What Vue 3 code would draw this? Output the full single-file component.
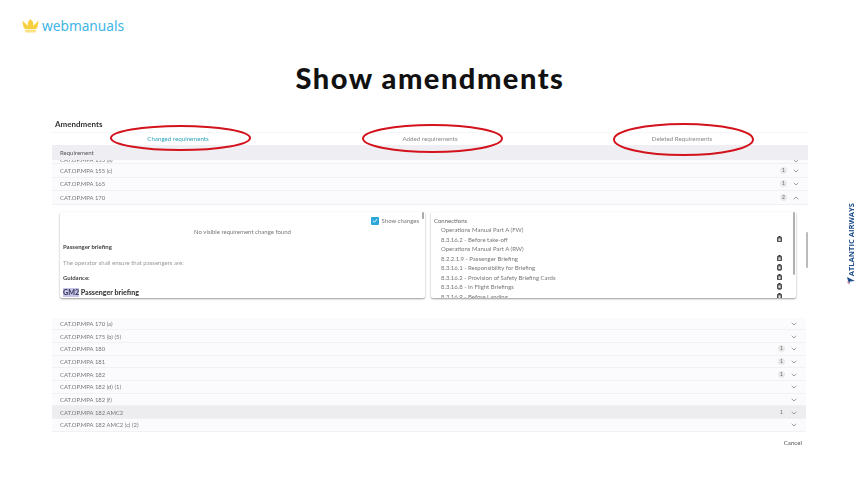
<script setup>
const topRows = [
  { name: 'CAT.OP.MPA 155 (c)', badge: 1 },
  { name: 'CAT.OP.MPA 165', badge: 1 },
  { name: 'CAT.OP.MPA 170', badge: 2, open: true }
]
const bottomRows = [
  { name: 'CAT.OP.MPA 170 (a)' },
  { name: 'CAT.OP.MPA 175 (b) (5)' },
  { name: 'CAT.OP.MPA 180', badge: 1 },
  { name: 'CAT.OP.MPA 181', badge: 1 },
  { name: 'CAT.OP.MPA 182', badge: 1 },
  { name: 'CAT.OP.MPA 182 (d) (1)' },
  { name: 'CAT.OP.MPA 182 (f)' },
  { name: 'CAT.OP.MPA 182 AMC2', badge: 1, selected: true },
  { name: 'CAT.OP.MPA 182 AMC2 (c) (2)' }
]
const tabs = [
  { label: 'Changed requirements', active: true },
  { label: 'Added requirements' },
  { label: 'Deleted Requirements' }
]
const marks = [
  { x: 111, y: 126, w: 139, h: 24 },
  { x: 363, y: 125, w: 139, h: 27 },
  { x: 614, y: 124, w: 139, h: 31 }
]
const connections = [
  { text: 'Operations Manual Part A (FW)' },
  { text: '8.3.16.2 - Before take-off', bin: true },
  { text: 'Operations Manual Part A (RW)' },
  { text: '8.2.2.1.9 - Passenger Briefing', bin: true },
  { text: '8.3.16.1 - Responsibility for Briefing', bin: true },
  { text: '8.3.16.2 - Provision of Safety Briefing Cards', bin: true },
  { text: '8.3.16.8 - In Flight Briefings', bin: true },
  { text: '8.3.16.9 - Before Landing', bin: true }
]
</script>

<template>
  <div class="slide">
    <header class="brand">
      <svg class="crown" viewBox="0 0 17 14" width="17" height="14">
        <path fill="#f8cf3e" d="M0.3 1.5 L4.5 5.5 L5.6 7 L6 3 L8.5 0 L11 3 L11.4 7 L12.5 5.5 L16.7 1.5 L15.4 8.5 Q14.2 10.2 13 10.2 L4 10.2 Q2.8 10.2 1.6 8.5 Z" />
        <path fill="#fbe27f" d="M2.6 11 H14.4 L13.4 13.6 H3.6 Z" />
      </svg>
      <span class="brand-name">webmanuals</span>
    </header>

    <h1 class="title">Show amendments</h1>

    <div class="stage">
      <section class="shot">
        <div class="shot-title">Amendments</div>
        <nav class="tabs">
          <div v-for="t in tabs" :key="t.label" class="tab" :class="{ active: t.active }">{{ t.label }}</div>
        </nav>
        <div class="thead">Requirement</div>

        <div class="row clipped">
          <span class="name">CAT.OP.MPA 155 (a)</span>
          <svg class="chev" viewBox="0 0 6 4" width="6" height="4"><path d="M.7 .8 3 3 5.3 .8" /></svg>
        </div>
        <div v-for="r in topRows" :key="r.name" class="row top">
          <span class="name">{{ r.name }}</span>
          <span v-if="r.badge" class="badge">{{ r.badge }}</span>
          <svg class="chev" viewBox="0 0 6 4" width="6" height="4">
            <path :d="r.open ? 'M.7 3.2 3 1 5.3 3.2' : 'M.7 .8 3 3 5.3 .8'" />
          </svg>
        </div>

        <div class="panel">
          <article class="card left">
            <div class="toggle">
              <span class="check">
                <svg viewBox="0 0 9 9" width="9" height="9"><path d="M2 4.7 3.8 6.5 7 2.8" /></svg>
              </span>
              <span>Show changes</span>
            </div>
            <p class="none">No visible requirement change found</p>
            <p class="strong first">Passenger briefing</p>
            <p class="light">The operator shall ensure that passengers are:</p>
            <p class="strong guide">Guidance:</p>
            <p class="gm"><mark>GM2</mark> Passenger briefing</p>
            <i class="thumb small"></i>
          </article>
          <article class="card right">
            <div class="conn-title">Connections</div>
            <div v-for="c in connections" :key="c.text" class="conn">
              <span>{{ c.text }}</span>
              <svg v-if="c.bin" class="bin" viewBox="0 0 5 6.5" width="5" height="6.5">
                <rect x="1.6" y="0" width="1.8" height="1" fill="#333" />
                <rect x="0.5" y="1" width="4" height="5.2" rx="0.8" fill="#666" stroke="#333" stroke-width="0.8" />
                <rect x="1.5" y="2.4" width="2" height="2.6" fill="#ddd" />
              </svg>
            </div>
            <i class="thumb tall"></i>
          </article>
          <i class="outer-thumb"></i>
        </div>

        <div class="lower">
          <div v-for="r in bottomRows" :key="r.name" class="row low" :class="{ selected: r.selected }">
            <span class="name">{{ r.name }}</span>
            <span v-if="r.badge" class="badge" :class="{ plain: r.selected }">{{ r.badge }}</span>
            <svg class="chev" viewBox="0 0 6 4" width="6" height="4"><path d="M.7 .8 3 3 5.3 .8" /></svg>
          </div>
        </div>
        <div class="actions">Cancel</div>
      </section>

      <aside class="airline">
        <span class="airline-name">ATLANTIC AIRWAYS</span>
        <svg viewBox="0 0 8 9" width="8" height="9">
          <path fill="#1f4e8c" d="M0 1 L8 5 L3 5.5 L2 8.5 Z" />
          <path fill="#e8808a" d="M0 5.5 L2 5.5 L1.4 8.5 Z" />
        </svg>
      </aside>
    </div>

    <svg class="marks" viewBox="0 0 865 487" width="865" height="487">
      <ellipse v-for="(m, i) in marks" :key="i"
        :cx="m.x + m.w / 2" :cy="m.y + m.h / 2" :rx="m.w / 2" :ry="m.h / 2" />
    </svg>
  </div>
</template>

<style>
html, body { margin: 0; background: #fff; }
</style>

<style scoped>
.slide {
  position: relative;
  width: 865px;
  height: 487px;
  overflow: hidden;
  background: #fff;
  font-family: "Lato", "Noto Sans", sans-serif;
}
.brand {
  display: flex;
  align-items: center;
  gap: 3px;
  height: 14px;
  padding: 19px 0 0 22px;
}
.crown { flex: none; }
.brand-name {
  font-family: "Noto Sans", sans-serif;
  font-size: 13.7px;
  line-height: 14px;
  margin-top: -1px;
  color: #40b5e6;
}
.title {
  margin: 27px 0 0;
  padding-right: 5px;
  height: 36px;
  line-height: 36px;
  text-align: center;
  font-family: "Lato", sans-serif;
  font-size: 29px;
  font-weight: 900;
  letter-spacing: 1.5px;
  color: #111;
}
.stage {
  display: flex;
  margin-top: 22px;
}
.shot {
  width: 756px;
  margin-left: 52px;
  filter: blur(0.35px);
}
.shot-title {
  height: 14px;
  line-height: 13px;
  padding-left: 3px;
  font-size: 8px;
  font-weight: 700;
  color: #333;
}
.tabs {
  display: grid;
  grid-template-columns: repeat(3, 1fr);
  height: 13px;
  border-top: 1px solid #f6f6f8;
  box-sizing: border-box;
}
.tab {
  text-align: center;
  line-height: 12px;
  font-size: 6.2px;
  color: #8a8a8a;
}
.tab.active { color: #2fa3b8; }
.thead {
  height: 15px;
  line-height: 15px;
  padding-left: 8px;
  background: #eeeef3;
  font-size: 6px;
  color: #555;
}
.row {
  display: flex;
  align-items: center;
  box-sizing: border-box;
  padding: 0 9px 0 8px;
  background: #fbfbfd;
  border-bottom: 1px solid #f1f1f4;
  font-size: 5.9px;
  color: #777;
}
.name { flex: 1; }
.row.clipped {
  height: 4px;
  overflow: hidden;
  align-items: flex-end;
}
.row.clipped .name { line-height: 7px; }
.row.top { height: 13.6px; }
.row.low {
  height: 12.65px;
  margin-right: 2px;
}
.row.selected { background: #ededf0; }
.badge {
  width: 7px;
  height: 7px;
  margin-right: 6px;
  border-radius: 50%;
  background: #e9e9e9;
  text-align: center;
  line-height: 7px;
  font-size: 5px;
  color: #666;
}
.badge.plain { background: transparent; }
.chev {
  flex: none;
  margin-top: 1px;
  fill: none;
  stroke: #888;
  stroke-width: 0.8;
}
.panel {
  position: relative;
  display: flex;
  gap: 6px;
  height: 100px;
  padding: 7px 0 0 8px;
  box-sizing: border-box;
  margin-bottom: 13px;
}
.card {
  position: relative;
  width: 365px;
  height: 86px;
  overflow: hidden;
  background: #fff;
  border-radius: 2px;
  box-shadow: 0 1px 2px rgba(0, 0, 0, 0.4);
  box-sizing: border-box;
  font-size: 6px;
  color: #555;
}
.card p { margin: 0; }
.card.left { padding: 4px 3px 0; }
.toggle {
  display: flex;
  justify-content: flex-end;
  align-items: center;
  gap: 3px;
  height: 10px;
  padding-right: 3px;
  color: #777;
}
.check {
  width: 8px;
  height: 8px;
  border-radius: 1px;
  background: #2ba6d9;
  display: flex;
  align-items: center;
  justify-content: center;
}
.check svg {
  fill: none;
  stroke: #fff;
  stroke-width: 1;
}
.none {
  height: 12px;
  line-height: 12px;
  text-align: center;
  color: #777;
}
.strong {
  font-weight: 700;
  color: #444;
}
.first { margin-top: 4px !important; height: 9px; line-height: 9px; }
.light {
  margin-top: 7px !important;
  height: 9px;
  line-height: 9px;
  color: #999;
}
.guide { margin-top: 6px !important; height: 9px; line-height: 9px; }
.gm {
  margin-top: 6px !important;
  font-size: 7.1px;
  font-weight: 900;
  line-height: 10px;
  color: #3a3a3a;
}
.gm mark {
  background: #c8c5ea;
  color: #3a3a5a;
}
.thumb {
  position: absolute;
  top: 0;
  width: 2.5px;
  border-radius: 1px;
  background: #aaa;
}
.thumb.small { right: 1px; height: 7px; }
.thumb.tall { right: 1px; height: 63px; background: #b0b0b0; }
.card.right { padding: 5px 3px 0; }
.conn-title {
  height: 8px;
  line-height: 8px;
  color: #666;
}
.conn {
  display: flex;
  align-items: center;
  justify-content: space-between;
  height: 9.5px;
  padding: 0 11px 0 7px;
  color: #777;
}
.bin { flex: none; }
.outer-thumb {
  position: absolute;
  right: 0;
  top: 27px;
  width: 2px;
  height: 36px;
  border-radius: 1px;
  background: #bbb;
}
.actions {
  height: 16px;
  line-height: 22px;
  text-align: right;
  padding-right: 6px;
  font-size: 6.2px;
  color: #555;
}
.airline {
  display: flex;
  flex-direction: column;
  align-items: center;
  margin: 85px 0 0 39px;
  width: 8px;
}
.airline-name {
  writing-mode: vertical-rl;
  transform: rotate(180deg);
  font-family: "Open Sans", sans-serif;
  font-size: 7.6px;
  font-weight: 700;
  line-height: 8px;
  color: #1f4e8c;
  white-space: nowrap;
}
.marks {
  position: absolute;
  inset: 0;
  pointer-events: none;
  fill: none;
  stroke: #d3121c;
  stroke-width: 2;
}
</style>
